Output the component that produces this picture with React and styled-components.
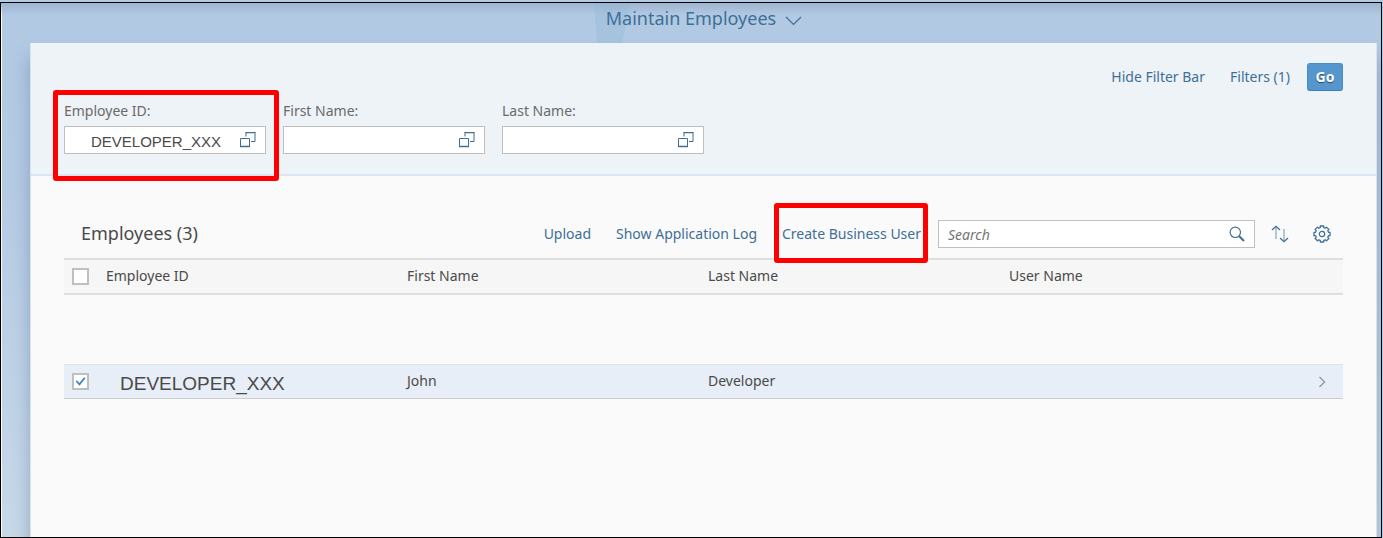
import React, { useState } from "react";
import styled, { createGlobalStyle, css } from "styled-components";

const UI_FONT = '"Noto Sans", "Open Sans", sans-serif';
const ENTRY_FONT = '"Liberation Sans", Arial, sans-serif';
const LINK = "#3f6f97";
const TEXT = "#4a4a4a";

const GlobalStyle = createGlobalStyle`
  *, *::before, *::after { box-sizing: border-box; }
  body {
    margin: 0;
    background: #b0cbe2;
    color: ${TEXT};
    font: 14px/20px ${UI_FONT};
  }
  button, input { font: inherit; color: inherit; }
`;

const Frame = styled.div`
  display: flex;
  flex-direction: column;
  min-height: calc(100vh - 2px);
  margin: 2px 1px 0 0;
  border: 1px solid #000000;
  overflow: hidden;
  background:
    linear-gradient(#9fb4d0, rgba(159, 180, 208, 0)) top / 100% 12px no-repeat,
    linear-gradient(90deg, #ffffff 1px, transparent 1px),
    linear-gradient(#b1c9e2 0%, #b5cbe4 35%, #c7d8e7 100%);
`;

const ShellHeader = styled.header`
  position: relative;
  display: flex;
  justify-content: center;
  height: 40px;
  padding: 0 0 10px 26px;
`;

const HeaderShape = styled.svg`
  position: absolute;
  top: 0;
  left: 43%;
  width: 36px;
  height: 40px;
`;

const TitleButton = styled.button`
  position: relative;
  display: flex;
  align-items: center;
  gap: 9px;
  padding: 0;
  border: 0;
  background: none;
  color: ${LINK};
  font-size: 18px;
  line-height: 30px;
  cursor: pointer;

  svg { margin-top: 6px; }
`;

const Page = styled.main`
  flex: 1;
  margin: 0 4px 0 29px;
  border: solid #d9e3ec;
  border-width: 0 1px;
  background: #fafafa;
  box-shadow: 0 14px 16px 0 rgba(84, 112, 150, 0.45);
`;

const FilterBar = styled.section`
  padding: 20px 33px 20px;
  border-bottom: 2px solid #dbe6f3;
  background: #eef3f8;
`;

const FilterActions = styled.div`
  display: flex;
  justify-content: flex-end;
  align-items: center;
  gap: 25px;
`;

const LinkButton = styled.button`
  position: relative;
  padding: 0;
  border: 0;
  background: none;
  color: ${LINK};
  line-height: 28px;
  white-space: nowrap;
  cursor: pointer;
  ${(p) => p.$marked && highlight}
`;

const GoButton = styled.button`
  width: 36px;
  height: 28px;
  margin-left: -8px;
  padding: 0;
  border: 1px solid #4a8cc8;
  border-bottom-color: #3a7fc0;
  border-radius: 3px;
  background: #5496cd;
  color: #ffffff;
  font-weight: 700;
  text-shadow: 0 1px 1px rgba(0, 0, 0, 0.5);
  cursor: pointer;
`;

const highlight = css`
  &::after {
    content: "";
    position: absolute;
    inset: ${(p) => p.$marked};
    border: 5px solid #ff0000;
    border-radius: 3px;
    pointer-events: none;
  }
`;

const Filters = styled.div`
  display: flex;
  gap: 17px;
  margin-top: 10px;
`;

const FilterField = styled.div`
  position: relative;
  width: 202px;
  ${(p) => p.$marked && highlight}

  label {
    display: block;
    margin-bottom: 5px;
    color: #6a6a6a;
  }
`;

const InputBox = styled.div`
  display: flex;
  align-items: center;
  width: ${(p) => p.$width || "auto"};
  height: 28px;
  padding-right: 9px;
  border: 1px solid #bfbfbf;
  background: #ffffff;

  input {
    flex: 1;
    min-width: 0;
    height: 26px;
    border: 0;
    outline: 0;
    background: none;
  }
`;

const EntryInput = styled.input`
  padding: 2px 0 0 26px;
  font-family: ${ENTRY_FONT};
  font-size: 15px;
`;

const SearchInput = styled.input`
  padding: 0 9px;

  &::placeholder {
    color: #757575;
    font-style: italic;
    opacity: 1;
  }
`;

const IconButton = styled.button`
  display: flex;
  flex: none;
  margin-left: ${(p) => p.$indent || "0"};
  padding: 0;
  border: 0;
  background: none;
  color: ${(p) => p.$color || LINK};
  cursor: pointer;
`;

const Results = styled.section`
  padding: 44px 33px 0;
`;

const Toolbar = styled.div`
  display: flex;
  align-items: center;
  height: 38px;
  padding: 0 12px 10px 17px;

  h2 {
    margin: 0 auto 2px 0;
    font-size: 18px;
    line-height: 24px;
    font-weight: 400;
  }
`;

const ToolbarLinks = styled.div`
  display: flex;
  gap: 25px;
  margin-right: 17px;
`;

const ToolbarIcons = styled.div`
  display: flex;
  gap: 24px;
  margin-left: 16px;
`;

const Table = styled.table`
  width: 100%;
  table-layout: fixed;
  border-collapse: separate;
  border-spacing: 0;

  th, td {
    padding: 0 0 2px;
    text-align: left;
    font-weight: 400;
    vertical-align: middle;
  }

  th:first-child, td:first-child, td:last-child { padding: 0; }
`;

const SelectColumn = styled.col`
  width: 42px;
`;

const NavColumn = styled.col`
  width: 33px;
`;

const HeadRow = styled.tr`
  th {
    height: 37px;
    border: solid #dedede;
    border-width: 2px 0;
    background: #f6f6f6;
  }
`;

const EmptyRow = styled.tr`
  td { height: 69px; }
`;

const BodyRow = styled.tr`
  td {
    height: 35px;
    border-top: 1px solid #e0e3e6;
    border-bottom: 1px solid #cccccc;
    background: #e7eef7;
  }
`;

const EmployeeId = styled.span`
  display: block;
  padding: 6px 0 0 14px;
  font: 19px/22px ${ENTRY_FONT};
`;

const CheckBox = styled.input.attrs({ type: "checkbox" })`
  appearance: none;
  display: grid;
  place-content: center;
  width: 17px;
  height: 17px;
  margin: 0 0 0 8px;
  border: 2px solid #bfbfbf;
  background: #ffffff;

  &:checked::before {
    content: "";
    width: 10px;
    height: 9px;
    background: #3d86c6;
    clip-path: polygon(0 48%, 14% 36%, 38% 66%, 86% 4%, 100% 14%, 40% 98%);
  }
`;

const Icon = ({ size = 16, height, children, ...rest }) => (
  <svg width={size} height={height || size} viewBox={`0 0 ${size} ${height || size}`}
    fill="none" stroke="currentColor" aria-hidden="true" {...rest}>
    {children}
  </svg>
);

const ChevronDown = () => (
  <Icon size={17} height={10} strokeWidth="1.2"><path d="M1 1l7.5 7.5L16 1" /></Icon>
);
const ValueHelp = () => (
  <Icon>
    <path d="M.5 6.5h9v8h-9z" />
    <path d="M6 4.5v-4h9v9h-4" />
    <path d="M0 14.5h10M5.5 .5h10" strokeWidth="1.4" />
  </Icon>
);
const SearchIcon = () => (
  <Icon>
    <circle cx="6.3" cy="6.3" r="5.2" strokeWidth="1.2" />
    <path d="M10.2 10.2l4.8 4.8" strokeWidth="2" />
  </Icon>
);
const SortIcon = () => (
  <Icon size={18}>
    <path d="M5 14V1.5M13 4v12.5" stroke="#8fabc4" strokeWidth="1.3" />
    <path d="M1 5l4-3.7L9 5M9 13l4 3.7L17 13" strokeWidth="1.3" />
  </Icon>
);

const GEAR = (() => {
  const points = [];
  for (let tooth = 0; tooth < 8; tooth += 1) {
    [[-15, 6.7], [-12, 8.2], [12, 8.2], [15, 6.7]].forEach(([offset, radius]) => {
      const angle = ((tooth * 45 + offset) * Math.PI) / 180;
      points.push(`${(9 + radius * Math.sin(angle)).toFixed(2)} ${(9 - radius * Math.cos(angle)).toFixed(2)}`);
    });
  }
  return `M${points.join("L")}Z`;
})();
const GearIcon = () => (
  <Icon size={18}>
    <path d={GEAR} strokeWidth="1.3" strokeLinejoin="round" />
    <circle cx="9" cy="9" r="2.7" strokeWidth="1.2" />
  </Icon>
);
const ChevronRight = () => (
  <Icon size={8} height={12} strokeWidth="1.4"><path d="M1.5 1L6.5 6l-5 5" /></Icon>
);

const FILTERS = [
  { id: "employee-id", label: "Employee ID", value: "DEVELOPER_XXX", marked: "-11px -13px -27px -11px" },
  { id: "first-name", label: "First Name", value: "" },
  { id: "last-name", label: "Last Name", value: "" },
];
const COLUMNS = ["Employee ID", "First Name", "Last Name", "User Name"];

export default function App() {
  const [selected, setSelected] = useState(true);

  return (
    <>
      <GlobalStyle />
      <Frame>
        <ShellHeader>
          <HeaderShape viewBox="0 0 36 40" aria-hidden="true">
            <path d="M0 0h36L28 40H3z" fill="#8fb6d8" opacity=".35" />
          </HeaderShape>
          <TitleButton>
            Maintain Employees
            <ChevronDown />
          </TitleButton>
        </ShellHeader>
        <Page>
          <FilterBar>
            <FilterActions>
              <LinkButton>Hide Filter Bar</LinkButton>
              <LinkButton>Filters (1)</LinkButton>
              <GoButton>Go</GoButton>
            </FilterActions>
            <Filters>
              {FILTERS.map((f) => (
                <FilterField key={f.id} $marked={f.marked}>
                  <label htmlFor={f.id}>{f.label}:</label>
                  <InputBox>
                    <EntryInput id={f.id} defaultValue={f.value} />
                    <IconButton aria-label={`Select ${f.label}`}><ValueHelp /></IconButton>
                  </InputBox>
                </FilterField>
              ))}
            </Filters>
          </FilterBar>
          <Results>
            <Toolbar>
              <h2>Employees (3)</h2>
              <ToolbarLinks>
                <LinkButton>Upload</LinkButton>
                <LinkButton>Show Application Log</LinkButton>
                <LinkButton $marked="-17px -7px -15px -8px">Create Business User</LinkButton>
              </ToolbarLinks>
              <InputBox $width="317px">
                <SearchInput aria-label="Search" placeholder="Search" />
                <IconButton aria-label="Start search"><SearchIcon /></IconButton>
              </InputBox>
              <ToolbarIcons>
                <IconButton aria-label="Sort"><SortIcon /></IconButton>
                <IconButton aria-label="Settings"><GearIcon /></IconButton>
              </ToolbarIcons>
            </Toolbar>
            <Table>
              <colgroup>
                <SelectColumn />
                {COLUMNS.map((c) => <col key={c} />)}
                <NavColumn />
              </colgroup>
              <thead>
                <HeadRow>
                  <th><CheckBox aria-label="Select all" /></th>
                  {COLUMNS.map((c) => <th key={c} scope="col">{c}</th>)}
                  <th />
                </HeadRow>
              </thead>
              <tbody>
                <EmptyRow><td colSpan={6} /></EmptyRow>
                <BodyRow>
                  <td>
                    <CheckBox aria-label="Select John Developer" checked={selected}
                      onChange={(e) => setSelected(e.target.checked)} />
                  </td>
                  <td><EmployeeId>DEVELOPER_XXX</EmployeeId></td>
                  <td>John</td>
                  <td>Developer</td>
                  <td />
                  <td>
                    <IconButton $color="#999999" $indent="8px" aria-label="Open employee"><ChevronRight /></IconButton>
                  </td>
                </BodyRow>
              </tbody>
            </Table>
          </Results>
        </Page>
      </Frame>
    </>
  );
}
